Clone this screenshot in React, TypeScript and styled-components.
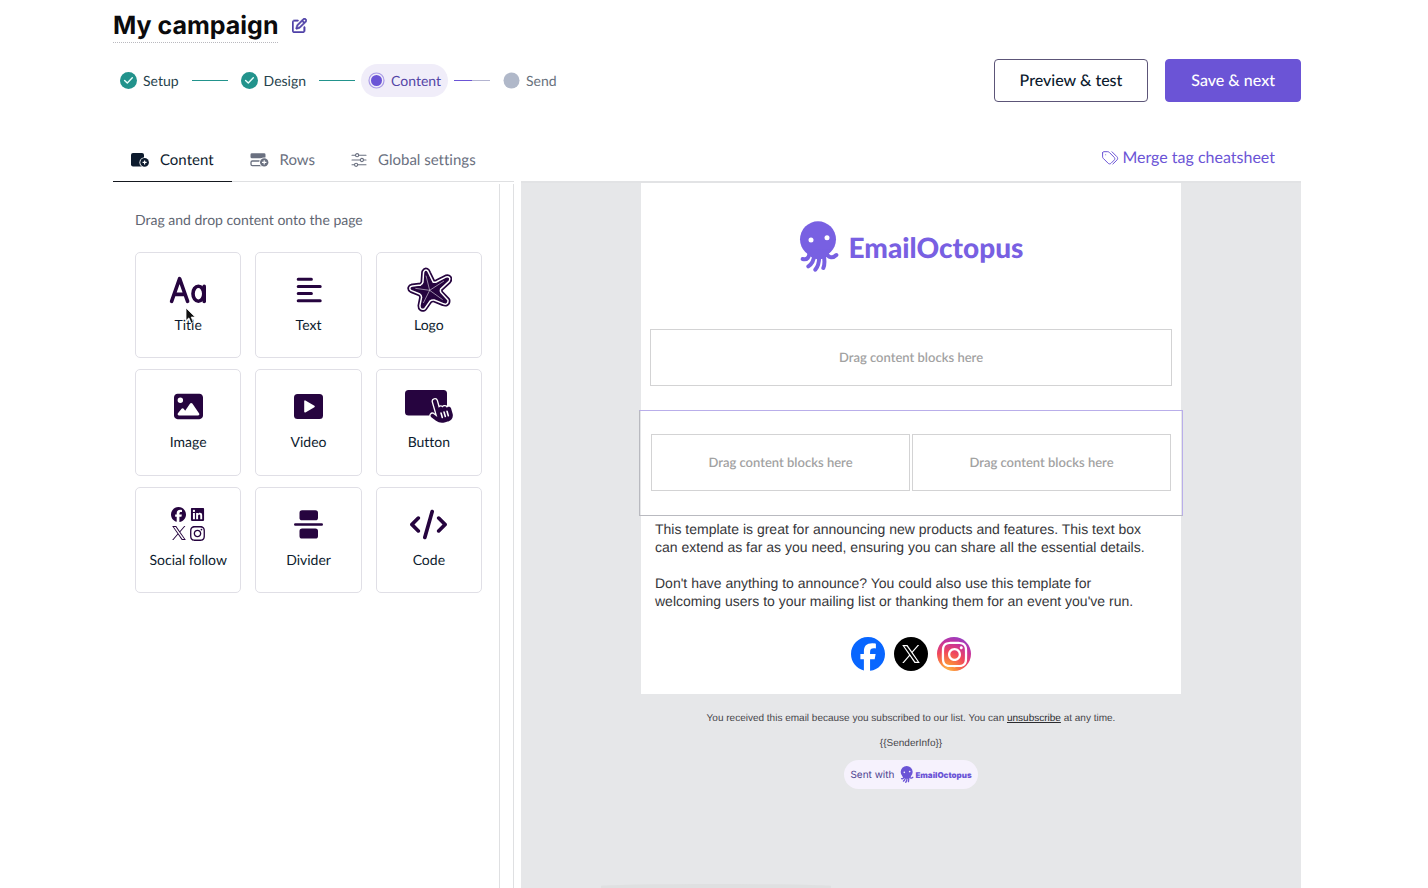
import React from "react";
import styled, { createGlobalStyle, css } from "styled-components";
import {
  FaCode,
  FaFacebook,
  FaHandPointer,
  FaImage,
  FaInstagram,
  FaLinkedin,
  FaRegPenToSquare,
} from "react-icons/fa6";

const ink = "#0d1b2e";
const plum = "#26043f";
const violet = "#6b54d6";
const teal = "#22938c";
const line = "#dfe0e2";

const GlobalStyle = createGlobalStyle`
  *, *::before, *::after { box-sizing: border-box; }
  body {
    margin: 0;
    background: #fff;
    color: ${ink};
    font-family: Lato, "Open Sans", sans-serif;
    font-variant-ligatures: none;
    text-rendering: geometricPrecision;
  }
  button {
    font: inherit;
    font-variant-ligatures: inherit;
    text-rendering: inherit;
    color: inherit;
    cursor: pointer;
  }
  h1, p, ol { margin: 0; padding: 0; }
`;

const Page = styled.div`
  display: flex;
  flex-direction: column;
  height: 100vh;
  overflow: hidden;
  padding: 8px 127px 0 113px;
`;

const TitleRow = styled.header`
  display: flex;
  align-items: center;
  gap: 14px;
`;

const Title = styled.h1`
  padding-top: 2px;
  font: 700 25px/32px Inter, "Liberation Sans", sans-serif;
  color: #0b0b0d;
  border-bottom: 1px dotted #b9b9bf;
`;

const EditButton = styled.button`
  display: flex;
  padding: 0;
  border: 0;
  background: none;
  && { color: #5142a8; }
`;

const Toolbar = styled.div`
  display: flex;
  justify-content: space-between;
  align-items: center;
  margin-top: 16px;
`;

const Steps = styled.ol`
  display: flex;
  align-items: center;
  list-style: none;
`;

type StepState = "done" | "current" | "todo";

const stepColour: Record<StepState, string> = {
  done: "#26424c",
  current: "#5344a6",
  todo: "#68717d",
};

const Step = styled.li<{ $state: StepState }>`
  display: flex;
  align-items: center;
  gap: 6px;
  height: 33px;
  padding: 0 7px;
  border-radius: 17px;
  font-size: 14px;
  line-height: 20px;
  color: ${(p) => stepColour[p.$state]};
  background: ${(p) => (p.$state === "current" ? "#f0edf9" : "transparent")};
`;

const Connector = styled.li<{ $half?: boolean }>`
  width: 36px;
  height: 1px;
  margin: 0 6px;
  background: ${(p) =>
    p.$half ? `linear-gradient(90deg, ${violet} 50%, #b3b4d0 50%)` : teal};
`;

const Actions = styled.div`
  display: flex;
  gap: 17px;
`;

const ActionButton = styled.button<{ $primary?: boolean }>`
  height: 43px;
  padding: 0 25px;
  border: 1px solid #5c5578;
  border-radius: 4px;
  background: #fff;
  font-size: 16px;
  line-height: 24px;
  font-weight: 500;
  ${(p) =>
    p.$primary &&
    css`
      background: ${violet};
      border-color: ${violet};
      && { color: #fff; }
    `}
`;

const Editor = styled.main`
  display: flex;
  flex: 1;
  min-height: 0;
  gap: 7px;
  margin-top: 36px;
`;

const Side = styled.section`
  display: flex;
  flex-direction: column;
  flex: 0 0 401px;
  min-width: 0;
`;

const Tabs = styled.div`
  display: flex;
  height: 44px;
  border-bottom: 1px solid ${line};
`;

const Tab = styled.button<{ $active?: boolean }>`
  display: flex;
  align-items: center;
  gap: 11px;
  height: 44px;
  padding: 0 18px;
  border: 0;
  border-bottom: 1px solid ${(p) => (p.$active ? "#15181f" : "transparent")};
  background: none;
  font-size: 15px;
  line-height: 20px;
  white-space: nowrap;
  && { color: ${(p) => (p.$active ? ink : "#6a7080")}; }
`;

const Panel = styled.div`
  flex: 1;
  margin-top: 2px;
  border-right: 1px solid ${line};
`;

const PanelBody = styled.div`
  height: 100%;
  margin-right: 13px;
  padding: 25px 17px 0 22px;
  border-right: 1px solid ${line};
`;

const Hint = styled.p`
  font-size: 14px;
  line-height: 22px;
  color: #5f6672;
`;

const Blocks = styled.div`
  display: grid;
  grid-template-columns: repeat(3, 1fr);
  gap: 11px 14px;
  margin-top: 21px;
`;

const Block = styled.button`
  position: relative;
  display: flex;
  flex-direction: column;
  align-items: center;
  aspect-ratio: 1;
  padding: 12px 0 0;
  border: 1px solid #e0dfe6;
  border-radius: 5px;
  background: #fff;
  font-size: 14px;
  line-height: 22px;
`;

const BlockIcon = styled.span`
  display: grid;
  place-items: center;
  height: 49px;
  color: ${plum};
`;

const SocialGrid = styled.span`
  display: grid;
  grid-template-columns: 15px 15px;
  gap: 3px 4px;
  place-items: center;
`;

const Pointer = styled.svg`
  position: absolute;
  left: 49px;
  top: 54px;
`;

const Stage = styled.section`
  display: flex;
  flex-direction: column;
  flex: 1;
  min-width: 0;
`;

const StageBar = styled.div`
  display: flex;
  justify-content: flex-end;
  align-items: center;
  height: 43px;
  padding: 0 26px 4px 0;
`;

const MergeLink = styled.a`
  display: flex;
  align-items: center;
  gap: 3px;
  font-size: 16px;
  line-height: 24px;
  text-decoration: none;
  color: ${violet};
`;

const Canvas = styled.div`
  position: relative;
  display: flex;
  flex-direction: column;
  align-items: center;
  flex: 1;
  border-top: 2px solid #e2e3e5;
  background: #e6e7e9;
`;

const Sheet = styled.article`
  width: 540px;
  max-width: 100%;
  padding-bottom: 23px;
  background: #fff;
`;

const Brand = styled.div`
  display: flex;
  justify-content: center;
  align-items: center;
  gap: 10px;
  padding-top: 38px;
  color: #7860e2;
`;

const BrandName = styled.span`
  font: 900 28px/34px Lato, sans-serif;
`;

const DropRow = styled.div<{ $selected?: boolean }>`
  display: flex;
  gap: 2px;
  ${(p) =>
    p.$selected
      ? css`
          margin: 24px -2px 0;
          padding: 23px 11px 24px;
          border: 1px solid;
          border-color: #b9aeea #b9aeea #b9bac0 #b9bac0;
        `
      : css`
          margin: 57px 9px 0;
        `}
`;

const DropZone = styled.div`
  display: grid;
  place-items: center;
  flex: 1;
  height: 57px;
  padding-bottom: 2px;
  border: 1px solid #d3d3d4;
  font-size: 13px;
  line-height: 18px;
  font-weight: 600;
  color: #a2a2a2;
`;

const Copy = styled.div`
  padding: 4px 14px 0;
  font: 14px/18px "Liberation Sans", Arial, sans-serif;
  color: #36363a;
  p + p { margin-top: 18px; }
`;

const Socials = styled.div`
  display: flex;
  justify-content: center;
  gap: 9px;
  margin-top: 27px;
`;

const SocialBadge = styled.a<{ $fill: string }>`
  display: grid;
  place-items: center;
  width: 34px;
  height: 34px;
  border-radius: 50%;
  background: ${(p) => p.$fill};
  color: #fff;
`;

const Legal = styled.footer`
  display: flex;
  flex-direction: column;
  align-items: center;
  gap: 8px;
  padding-top: 16px;
  font: 10px/16px "Liberation Sans", Arial, sans-serif;
  color: #46464a;
  p { padding-top: 1px; }
  a { color: #2b2b2e; }
`;

const SentWith = styled.div`
  display: flex;
  align-items: center;
  gap: 6px;
  height: 29px;
  padding: 0 6px;
  border-radius: 15px;
  background: #f6f2fd;
  font: 10px/14px Inter, sans-serif;
  color: #4c3f8f;
`;

const SentBrand = styled.span`
  display: flex;
  align-items: center;
  gap: 1px;
  font-size: 8px;
  font-weight: 900;
  color: ${violet};
`;

const Shade = styled.div`
  position: absolute;
  left: 80px;
  bottom: 0;
  width: 230px;
  height: 4px;
  border-radius: 50% 50% 0 0;
  background: #dfe0e1;
`;

const DoneMark = () => (
  <svg width="17" height="17" viewBox="0 0 17 17" aria-hidden="true">
    <circle cx="8.5" cy="8.5" r="8.5" fill={teal} />
    <path d="M4.6 8.4l2.7 2.6 5-5.2" fill="none" stroke="#e9fffb" strokeWidth="1.4" strokeLinecap="round" strokeLinejoin="round" />
  </svg>
);

const CurrentMark = () => (
  <svg width="17" height="17" viewBox="0 0 17 17" aria-hidden="true">
    <circle cx="8.5" cy="8.5" r="7.5" fill="none" stroke="#a99be6" strokeWidth="1.2" />
    <circle cx="8.5" cy="8.5" r="5.5" fill={violet} />
  </svg>
);

const TodoMark = () => (
  <svg width="17" height="17" viewBox="0 0 17 17" aria-hidden="true">
    <circle cx="8.5" cy="8.5" r="8" fill="#b0b8c9" />
  </svg>
);

const ContentTabIcon = () => (
  <svg width="18" height="14" viewBox="0 0 18 14" aria-hidden="true">
    <rect width="13" height="13.4" rx="2" fill="currentColor" />
    <circle cx="13.6" cy="9.4" r="5.2" fill="#fff" />
    <circle cx="13.6" cy="9.4" r="4.3" fill="currentColor" />
    <path d="M13.6 7.4v4M11.6 9.4h4" stroke="#fff" strokeWidth="1.2" />
  </svg>
);

const RowsTabIcon = () => (
  <svg width="19" height="14" viewBox="0 0 19 14" aria-hidden="true">
    <rect x=".5" y=".3" width="15" height="5" rx="1.4" fill="currentColor" />
    <rect x="1" y="8" width="13" height="4.6" rx="1.4" fill="none" stroke="currentColor" strokeWidth="1.3" />
    <circle cx="14.2" cy="9.4" r="5" fill="#fff" />
    <circle cx="14.2" cy="9.4" r="4.2" fill="currentColor" />
    <path d="M14.2 7.2v4.4M12 9.4h4.4" stroke="#fff" strokeWidth="1.2" />
  </svg>
);

const SettingsTabIcon = () => (
  <svg width="16" height="14" viewBox="0 0 16 14" fill="none" stroke="currentColor" strokeWidth="1.1" strokeLinecap="round" aria-hidden="true">
    <path d="M1 2.2h3.4M7.8 2.2h7.2M1 7h8.2M12.6 7H15M1 11.8h2.4M6.8 11.8H15" />
    <circle cx="6.1" cy="2.2" r="1.6" />
    <circle cx="10.9" cy="7" r="1.6" />
    <circle cx="5.1" cy="11.8" r="1.6" />
  </svg>
);

const TagsIcon = () => (
  <svg width="17" height="14" viewBox="0 0 17 14" fill="none" stroke="currentColor" strokeWidth="1" strokeLinecap="round" aria-hidden="true">
    <path d="M.6 1.9v4c0 .5.2 1 .6 1.4l5 5c.8.8 2 .8 2.8 0l3.2-3.2c.8-.8.8-2 0-2.8l-5-5C6.8.9 6.3.7 5.8.7h-4C1.1.7.6 1.2.6 1.9z" />
    <path d="M10 .8l4.9 4.9c1 1 1 2.4 0 3.4L10.9 13" />
    <circle cx="3.7" cy="3.8" r=".5" fill="currentColor" stroke="none" />
  </svg>
);

const TitleIcon = () => (
  <svg width="38" height="28" viewBox="0 0 38 28" fill="none" stroke="currentColor" strokeWidth="3.6" strokeLinecap="round" strokeLinejoin="round" aria-hidden="true">
    <path d="M2.6 25.400L10.600 2.600 18.600 25.400M5.600 18.400h10" />
    <ellipse cx="29.400" cy="17.700" rx="5.400" ry="7.500" />
    <path d="M35.200 10.200V25.400" />
  </svg>
);

const TextIcon = () => (
  <svg width="26" height="26" viewBox="0 0 26 26" stroke="currentColor" strokeWidth="3" strokeLinecap="round" aria-hidden="true">
    <path d="M2.2 2.2h13.2M2.2 9.400h22M2.2 16.600h13.200M2.2 23.800h22" />
  </svg>
);

const STAR =
  "M915 94Q919 88 922 97L936 126Q942 130 952 126L979 112Q988 110 984 118L958 142Q955 150 959 157L980 179Q980 188 971 184L944 173Q934 171 927 177L911 200Q904 203 904 194L909 169Q909 160 901 155L876 145Q870 141 878 139L903 136Q911 133 913 124Z";

const StarfishIcon = () => (
  <svg width="46" height="48" viewBox="858 75 138 144" strokeLinejoin="round" aria-hidden="true">
    <path d={STAR} fill="currentColor" stroke="currentColor" strokeWidth="23" />
    <path d={STAR} fill="currentColor" stroke="#fff" strokeWidth="13" />
    <path d={STAR} fill="currentColor" stroke="currentColor" strokeWidth="4" />
    <path d="M929 148L918 104M929 148L972 120M929 148L968 176M929 148L910 186M929 148L886 142" stroke="#fff" strokeWidth="1.6" />
  </svg>
);

const VideoIcon = () => (
  <svg width="29" height="25" viewBox="0 0 29 25" aria-hidden="true">
    <rect width="29" height="25" rx="3.5" fill="currentColor" />
    <path d="M11 7.2v10.600l9-5.300z" fill="#fff" stroke="#fff" strokeWidth="1.6" strokeLinejoin="round" />
  </svg>
);

const ButtonIcon = () => (
  <svg width="48" height="34" viewBox="0 0 48 34" aria-hidden="true">
    <rect x="0" y="0" width="42" height="25.5" rx="3.5" fill="currentColor" />
    <g transform="rotate(-16 36 21)" style={{ paintOrder: "stroke" }}>
      <FaHandPointer x="23" y="8" size={25} stroke="#fff" strokeWidth="54" overflow="visible" />
    </g>
  </svg>
);

const DividerIcon = () => (
  <svg width="29" height="29" viewBox="0 0 29 29" fill="currentColor" aria-hidden="true">
    <rect x="5.5" y=".3" width="18.5" height="10" rx="2.6" />
    <rect y="13.2" width="29" height="2.6" rx="1.3" />
    <rect x="5.5" y="18.5" width="18.5" height="10" rx="2.6" />
  </svg>
);

const XLogo = ({ size }: { size: number }) => (
  <svg width={size} height={size} viewBox="0 0 1200 1227" fill="currentColor" aria-hidden="true">
    <path d="M714.163 519.284L1160.89 0H1055.03L667.137 450.887L357.328 0H0L468.492 681.821L0 1226.37H105.866L515.491 750.218L842.672 1226.37H1200L714.137 519.284H714.163ZM569.165 687.828L521.697 619.934L144.011 79.694H306.615L611.412 515.685L658.88 583.579L1055.08 1150.3H892.476L569.165 687.854V687.828Z" />
  </svg>
);

const SocialIcon = () => (
  <SocialGrid>
    <FaFacebook size={15} />
    <FaLinkedin size={15} />
    <XLogo size={14} />
    <FaInstagram size={17} />
  </SocialGrid>
);

const Octopus = ({ width, height, eyes }: { width: number; height: number; eyes: string }) => (
  <svg width={width} height={height} viewBox="58 61 120 153" aria-hidden="true">
    <g fill="none" stroke="currentColor" strokeWidth="12" strokeLinecap="round">
      <path d="M90 150C90 170 82 179 69 175" />
      <path d="M104 150C105 175 99 189 86 197" />
      <path d="M117 150C121 180 116 197 107 207" />
      <path d="M129 150C136 175 137 188 131 202" />
      <path d="M136 150C144 174 160 173 170 163" />
    </g>
    <circle cx="115" cy="116" r="54" fill="currentColor" />
    <path d="M74 145L88 164Q112 186 142 168L155 146Z" fill="currentColor" />
    <circle cx="94" cy="118" r="7.5" fill={eyes} />
    <circle cx="142" cy="111" r="7.5" fill={eyes} />
  </svg>
);

const blocks: { label: string; icon: React.ReactNode }[] = [
  { label: "Title", icon: <TitleIcon /> },
  { label: "Text", icon: <TextIcon /> },
  { label: "Logo", icon: <StarfishIcon /> },
  { label: "Image", icon: <FaImage size={29} /> },
  { label: "Video", icon: <VideoIcon /> },
  { label: "Button", icon: <ButtonIcon /> },
  { label: "Social follow", icon: <SocialIcon /> },
  { label: "Divider", icon: <DividerIcon /> },
  { label: "Code", icon: <FaCode size={37} /> },
];

const dropText = "Drag content blocks here";

export default function App() {
  return (
    <>
      <GlobalStyle />
      <Page>
        <TitleRow>
          <Title>My campaign</Title>
          <EditButton aria-label="Rename campaign">
            <FaRegPenToSquare size={15} strokeWidth={20} />
          </EditButton>
        </TitleRow>

        <Toolbar>
          <Steps>
            <Step $state="done"><DoneMark />Setup</Step>
            <Connector aria-hidden="true" />
            <Step $state="done"><DoneMark />Design</Step>
            <Connector aria-hidden="true" />
            <Step $state="current" aria-current="step"><CurrentMark />Content</Step>
            <Connector $half aria-hidden="true" />
            <Step $state="todo"><TodoMark />Send</Step>
          </Steps>
          <Actions>
            <ActionButton>Preview &amp; test</ActionButton>
            <ActionButton $primary>Save &amp; next</ActionButton>
          </Actions>
        </Toolbar>

        <Editor>
          <Side>
            <Tabs role="tablist">
              <Tab role="tab" aria-selected="true" $active><ContentTabIcon />Content</Tab>
              <Tab role="tab" aria-selected="false"><RowsTabIcon />Rows</Tab>
              <Tab role="tab" aria-selected="false"><SettingsTabIcon />Global settings</Tab>
            </Tabs>
            <Panel>
              <PanelBody>
                <Hint>Drag and drop content onto the page</Hint>
                <Blocks>
                  {blocks.map(({ label, icon }) => (
                    <Block key={label}>
                      <BlockIcon>{icon}</BlockIcon>
                      {label}
                      {label === "Title" && (
                        <Pointer width="12" height="18" viewBox="0 0 12 18" aria-hidden="true">
                          <path d="M1 1v12.6l2.9-2.7 2.3 5.4 2.3-1-2.3-5.2h4z" fill="#111" stroke="#fff" strokeWidth=".8" />
                        </Pointer>
                      )}
                    </Block>
                  ))}
                </Blocks>
              </PanelBody>
            </Panel>
          </Side>

          <Stage>
            <StageBar>
              <MergeLink href="#merge-tags"><TagsIcon />Merge tag cheatsheet</MergeLink>
            </StageBar>
            <Canvas>
              <Sheet>
                <Brand>
                  <Octopus width={40} height={51} eyes="#fff" />
                  <BrandName>EmailOctopus</BrandName>
                </Brand>
                <DropRow>
                  <DropZone>{dropText}</DropZone>
                </DropRow>
                <DropRow $selected>
                  <DropZone>{dropText}</DropZone>
                  <DropZone>{dropText}</DropZone>
                </DropRow>
                <Copy>
                  <p>
                    This template is great for announcing new products and features. This text box
                    <br />
                    can extend as far as you need, ensuring you can share all the essential details.
                  </p>
                  <p>
                    Don't have anything to announce? You could also use this template for
                    <br />
                    welcoming users to your mailing list or thanking them for an event you've run.
                  </p>
                </Copy>
                <Socials>
                  <SocialBadge href="#facebook" aria-label="Facebook" $fill="#fff">
                    <FaFacebook size={34} color="#0866ff" />
                  </SocialBadge>
                  <SocialBadge href="#x" aria-label="X" $fill="#000">
                    <XLogo size={18} />
                  </SocialBadge>
                  <SocialBadge
                    href="#instagram"
                    aria-label="Instagram"
                    $fill="radial-gradient(circle at 28% 104%, #fdc04f 0%, #fb8a3c 22%, #f0475c 48%, #c432a0 72%, #6a4be0 100%)"
                  >
                    <FaInstagram size={29} />
                  </SocialBadge>
                </Socials>
              </Sheet>
              <Legal>
                <p>
                  You received this email because you subscribed to our list. You can{" "}
                  <a href="#unsubscribe">unsubscribe</a> at any time.
                </p>
                <p>{"{{SenderInfo}}"}</p>
                <SentWith>
                  Sent with
                  <SentBrand>
                    <Octopus width={14} height={17} eyes="#f6f2fd" />
                    EmailOctopus
                  </SentBrand>
                </SentWith>
              </Legal>
              <Shade />
            </Canvas>
          </Stage>
        </Editor>
      </Page>
    </>
  );
}
